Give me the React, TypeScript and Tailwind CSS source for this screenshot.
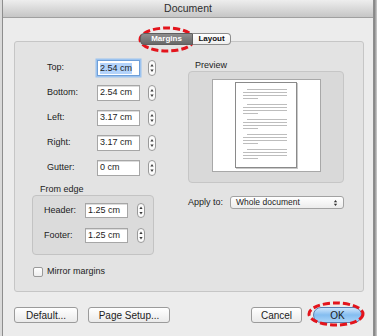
import React from 'react';

const Stepper = ({ tall = true }: { tall?: boolean }) => {
  const h = tall ? 16 : 15;
  const m = h / 2;
  return (
    <svg width="8" height={h} viewBox={`0 0 8 ${h}`} className="shrink-0">
      <rect x="0.5" y="0.5" width="7" height={h - 1} rx="3.5" fill="#fbfbfb" stroke="#9a9a9a" />
      <path d={`M2.4 ${m - 1.5} L4 ${m - 4} L5.6 ${m - 1.5} Z`} fill="#3a3a3a" />
      <path d={`M2.4 ${m + 1.5} L4 ${m + 4} L5.6 ${m + 1.5} Z`} fill="#3a3a3a" />
    </svg>
  );
};

const marginRows = [
  { label: 'Top:', value: '2.54 cm', focused: true },
  { label: 'Bottom:', value: '2.54 cm' },
  { label: 'Left:', value: '3.17 cm' },
  { label: 'Right:', value: '3.17 cm' },
  { label: 'Gutter:', value: '0 cm' },
];

const edgeRows = [
  { label: 'Header:', value: '1.25 cm' },
  { label: 'Footer:', value: '1.25 cm' },
];

function DashedRing({ className, w, h }: { className: string; w: number; h: number }) {
  return (
    <svg width={w} height={h} className={className}>
      <ellipse
        cx={w / 2}
        cy={h / 2}
        rx={w / 2 - 2}
        ry={h / 2 - 2}
        fill="none"
        stroke="#e3141c"
        strokeWidth={3}
        strokeDasharray="7 3"
      />
    </svg>
  );
}

export default function App() {
  return (
    <div className="w-[377px] h-[336px] flex bg-[#dadada] pl-[2px] overflow-hidden font-['Liberation_Sans',Arial,sans-serif] text-[#1c1c1c]">
      {/* Window */}
      <div className="relative w-[372px] h-full flex flex-col bg-[#ececec] border-x border-[#8e8e8e]">
        {/* Title bar */}
        <div className="h-[18px] shrink-0 flex items-center justify-center bg-gradient-to-b from-[#eeeeee] to-[#c6c6c6] border-b border-[#a0a0a0] text-[10.5px] text-[#2e2e2e]">
          Document
        </div>

        {/* Tabs */}
        <div className="relative z-10 mt-[15px] ml-[137px] flex h-[12px] text-[8px] font-bold leading-none">
          <div className="w-[53px] h-full flex items-center justify-center rounded-l-[4px] border border-[#5e5e5e] bg-gradient-to-b from-[#8e8e8e] to-[#686868] text-white">
            Margins
          </div>
          <div className="w-[38px] h-full flex items-center justify-center rounded-r-[4px] border border-l-0 border-[#8c8c8c] bg-gradient-to-b from-white to-[#efefef] text-[#111]">
            Layout
          </div>
        </div>

        {/* Tab box */}
        <div className="-mt-[4px] ml-[11px] w-[350px] h-[251px] shrink-0 flex pl-[17px] rounded-[3px] border border-[#c6c6c6] bg-[#e3e3e3] text-[9px]">
          {/* Left column */}
          <div className="w-[156px] flex flex-col pt-[18px]">
            <div className="flex flex-col gap-[9px] pl-[15px]">
              {marginRows.map((r) => (
                <div key={r.label} className="flex items-center h-[16px]">
                  <span className="w-[50px]">{r.label}</span>
                  <div
                    className={
                      r.focused
                        ? 'w-[43px] h-[16px] flex items-center pl-[2px] bg-white border border-[#6f9fd8] shadow-[0_0_0_1.5px_#9cc3ef]'
                        : 'w-[43px] h-[16px] flex items-center pl-[2px] bg-white border border-[#a6a6a6] shadow-[inset_0_1px_0_#dcdcdc]'
                    }
                  >
                    {r.focused ? <span className="bg-[#b3d3fb] leading-[11px]">{r.value}</span> : r.value}
                  </div>
                  <div className="ml-[8px] flex">
                    <Stepper />
                  </div>
                </div>
              ))}
            </div>

            <div className="mt-[8px] h-[11px] leading-[11px] pl-[8px]">From edge</div>
            <div className="w-[122px] flex flex-col gap-[10px] pt-[7px] pb-[11px] rounded-[4px] border border-[#c3c3c3] bg-[#dbdbdb]">
              {edgeRows.map((r) => (
                <div key={r.label} className="flex items-center h-[15px] pl-[11px]">
                  <span className="w-[41px]">{r.label}</span>
                  <div className="w-[43px] h-[15px] flex items-center pl-[2px] bg-white border border-[#a6a6a6] shadow-[inset_0_1px_0_#dcdcdc]">
                    {r.value}
                  </div>
                  <div className="ml-[9px] flex">
                    <Stepper tall={false} />
                  </div>
                </div>
              ))}
            </div>

            <div className="mt-[12px] pl-[1px] flex items-center h-[10px]">
              <div className="w-[10px] h-[10px] rounded-[2px] border border-[#9a9a9a] bg-gradient-to-b from-white to-[#eeeeee]" />
              <span className="ml-[4px]">Mirror margins</span>
            </div>
          </div>

          {/* Right column */}
          <div className="w-[156px] flex flex-col pt-[18px]">
            <div className="h-[11px] leading-[11px] pl-[7px]">Preview</div>
            <div className="h-[112px] flex justify-center pt-[7px] rounded-[4px] border border-[#c6c6c6] bg-[#d9d9d9]">
              <div className="w-[109px] h-[93px] flex justify-center pt-[2px] bg-white border border-[#a8a8a8]">
                <div className="w-[62px] h-[86px] flex flex-col gap-[5px] pt-[6px] pl-[7px] bg-white border border-[#8a8a8a] shadow-[1px_1px_0_#c9c9c9]">
                  {[0, 1, 2, 3, 4].map((g) => (
                    <div key={g} className="flex flex-col gap-[2px]">
                      <div className="ml-[4px] w-[40px] h-px bg-[#bdbdbd]" />
                      <div className="w-[44px] h-px bg-[#bdbdbd]" />
                      <div className="w-[44px] h-px bg-[#bdbdbd]" />
                      <div className="w-[15px] h-px bg-[#bdbdbd]" />
                    </div>
                  ))}
                </div>
              </div>
            </div>

            <div className="mt-[13px] flex items-center h-[13px]">
              <span className="w-[42px]">Apply to:</span>
              <div className="w-[114px] h-[13px] flex items-center justify-between pl-[5px] pr-[5px] rounded-[3px] border border-[#a2a2a2] bg-gradient-to-b from-white to-[#ececec] text-[8.5px]">
                <span>Whole document</span>
                <svg width="5" height="8" viewBox="0 0 5 8">
                  <path d="M0.8 3.2 L2.5 1 L4.2 3.2 Z" fill="#333" />
                  <path d="M0.8 4.8 L2.5 7 L4.2 4.8 Z" fill="#333" />
                </svg>
              </div>
            </div>
          </div>
        </div>

        {/* Buttons */}
        <div className="mt-[15px] h-[16px] flex px-[11px] text-[10px]">
          <div className="w-[64px] h-full flex items-center justify-center rounded-[3px] border border-[#9b9b9b] bg-gradient-to-b from-white to-[#eaeaea]">
            Default...
          </div>
          <div className="ml-[10px] w-[82px] h-full flex items-center justify-center rounded-[3px] border border-[#9b9b9b] bg-gradient-to-b from-white to-[#eaeaea]">
            Page Setup...
          </div>
          <div className="flex-1" />
          <div className="w-[51px] h-full flex items-center justify-center rounded-[3px] border border-[#9b9b9b] bg-gradient-to-b from-white to-[#eaeaea]">
            Cancel
          </div>
          <div className="ml-[11px] w-[49px] h-full flex items-center justify-center rounded-[8px] border border-[#5a7fb0] bg-gradient-to-b from-[#cfe6fb] via-[#84bdf0] to-[#a9d4f8]">
            OK
          </div>
        </div>

        {/* Red highlight rings */}
        <DashedRing className="absolute left-[135px] top-[26px]" w={58} h={27} />
        <DashedRing className="absolute left-[304px] top-[301px]" w={58} h={26} />
      </div>
      <div className="flex-1 bg-gradient-to-r from-[#7c7c7c] to-[#d0d0d0]" />
    </div>
  );
}
